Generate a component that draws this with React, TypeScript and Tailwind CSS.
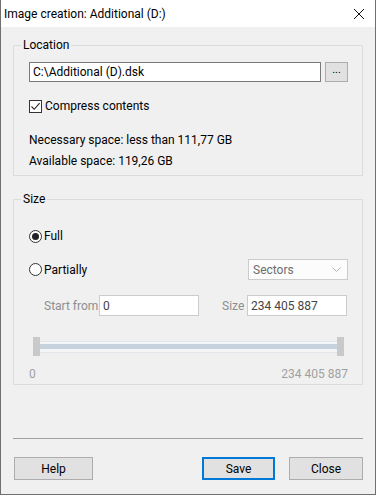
import React from 'react'

const font = { fontFamily: 'Roboto, "Segoe UI", Arial, sans-serif' }

function Checkbox({ checked }: { checked: boolean }) {
  return (
    <span className="flex h-[13px] w-[13px] items-center justify-center border border-[#333] bg-white">
      {checked && (
        <svg width="11" height="11" viewBox="0 0 11 11">
          <path d="M1.5 5.5 L4.2 8.3 L9.6 2.2" fill="none" stroke="#222" strokeWidth="1.1" />
        </svg>
      )}
    </span>
  )
}

function Radio({ checked }: { checked: boolean }) {
  return (
    <span className="flex h-[13px] w-[13px] items-center justify-center rounded-full border border-[#333] bg-white">
      {checked && <span className="h-[7px] w-[7px] rounded-full bg-[#222]" />}
    </span>
  )
}

function Button({ label, primary, className }: { label: string; primary?: boolean; className?: string }) {
  return (
    <button
      className={
        'flex h-[23px] items-center justify-center bg-[#e1e1e1] text-[12px] text-black ' +
        (primary ? 'border-2 border-[#0078d7] ' : 'border border-[#adadad] ') +
        (className || '')
      }
    >
      {label}
    </button>
  )
}

export default function App() {
  return (
    <div className="flex h-[495px] w-[376px] flex-col border-x border-b border-[#6f6f6f] bg-[#f0f0f0] text-[12px] text-black" style={font}>
      {/* Title bar */}
      <div className="flex h-[27px] shrink-0 items-center justify-between bg-white pl-[3px] pr-[10px]">
        <span className="text-[12px]">Image creation: Additional (D:)</span>
        <svg width="12" height="12" viewBox="0 0 12 12">
          <path d="M1 1 L11 11 M11 1 L1 11" stroke="#111" strokeWidth="1" />
        </svg>
      </div>

      <div className="flex flex-1 flex-col px-[12px]">
        {/* Location */}
        <fieldset className="mt-[10px] h-[139px] border border-[#dcdcdc]">
          <legend className="ml-[7px] px-[2px] leading-[16px]">Location</legend>
          <div className="pl-[15px] pr-[14px]">
            <div className="mt-[9px] flex items-center gap-[4px]">
              <div className="flex h-[20px] w-[292px] items-center border border-[#7a7a7a] bg-white px-[3px]">C:\Additional (D).dsk</div>
              <div className="flex h-[20px] w-[23px] items-center justify-center border border-[#adadad] bg-[#e1e1e1] pb-[3px] text-[11px]">...</div>
            </div>
            <div className="mt-[15px] flex items-center gap-[3px]">
              <Checkbox checked />
              <span>Compress contents</span>
            </div>
            <div className="mt-[15px] leading-[21px]">
              <div>Necessary space: less than 111,77 GB</div>
              <div>Available space: 119,26 GB</div>
            </div>
          </div>
        </fieldset>

        {/* Size */}
        <fieldset className="mt-[15px] h-[194px] border border-[#dcdcdc]">
          <legend className="ml-[7px] px-[2px] leading-[16px]">Size</legend>
          <div className="pl-[15px] pr-[14px]">
            <div className="mt-[20px] flex items-center gap-[2px]">
              <Radio checked />
              <span>Full</span>
            </div>
            <div className="mt-[14px] flex items-center justify-between">
              <div className="flex items-center gap-[2px]">
                <Radio checked={false} />
                <span>Partially</span>
              </div>
              <div className="flex h-[21px] w-[100px] items-center justify-between border border-[#cccccc] bg-[#fcfcfc] pl-[4px] pr-[6px] text-[#6d6d6d]">
                <span>Sectors</span>
                <svg width="9" height="6" viewBox="0 0 9 6">
                  <path d="M0.5 0.5 L4.5 4.5 L8.5 0.5" fill="none" stroke="#b5b5b5" strokeWidth="1" />
                </svg>
              </div>
            </div>
            <div className="mt-[15px] flex items-center">
              <span className="ml-[15px] w-[55px] whitespace-nowrap text-[#8e8e8e]">Start from</span>
              <div className="flex h-[21px] w-[100px] items-center border border-[#cccccc] bg-white px-[3px] text-[#444]">0</div>
              <span className="ml-[23px] w-[25px] text-[#8e8e8e]">Size</span>
              <div className="flex h-[21px] w-[100px] items-center border border-[#cccccc] bg-white px-[3px] text-[#444]">234 405 887</div>
            </div>
            <div className="mt-[21px] flex h-[19px] items-center pl-[4px] pr-[4px]">
              <div className="h-[19px] w-[7px] bg-[#c9c9c9]" />
              <div className="flex h-[12px] flex-1 items-center border-y border-[#e2e6ea] bg-[#f3f5f7]">
                <div className="h-[5px] w-full bg-[#c5d2de]" />
              </div>
              <div className="h-[19px] w-[7px] bg-[#c9c9c9]" />
            </div>
            <div className="mt-[9px] flex justify-between text-[#a0a0a0]">
              <span>0</span>
              <span>234 405 887</span>
            </div>
          </div>
        </fieldset>

        <div className="mt-auto border-t border-[#a0a0a0]" />
        <div className="mb-[14px] mt-[18px] flex items-center pl-[1px]">
          <Button label="Help" className="w-[79px]" />
          <Button label="Save" primary className="ml-auto w-[73px]" />
          <Button label="Close" className="ml-[14px] w-[74px]" />
        </div>
      </div>
    </div>
  )
}
